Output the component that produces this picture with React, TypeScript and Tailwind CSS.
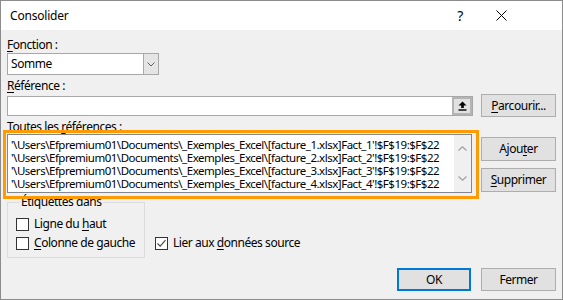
import React from "react";

const U = ({ children }: { children: React.ReactNode }) => (
  <span className="underline underline-offset-[2px] decoration-[1px]">{children}</span>
);

const Btn = ({ children, className = "" }: { children: React.ReactNode; className?: string }) => (
  <div
    className={`flex items-center justify-center bg-[#e1e1e1] border border-[#adadad] text-black ${className}`}
  >
    {children}
  </div>
);

const Check = ({ checked = false }: { checked?: boolean }) => (
  <div className="w-[13px] h-[13px] border border-[#333333] bg-white flex items-center justify-center shrink-0">
    {checked && (
      <svg width="11" height="11" viewBox="0 0 11 11">
        <path d="M1.5 5.5 L4.2 8.2 L9.5 2.2" fill="none" stroke="#444" strokeWidth="1.1" />
      </svg>
    )}
  </div>
);

const lines = [1, 2, 3, 4].map(
  (n) =>
    `'\\Users\\Efpremium01\\Documents\\_Exemples_Excel\\[facture_${n}.xlsx]Fact_${n}'!$F$19:$F$22`
);

export default function App() {
  return (
    <div
      className="w-[563px] h-[300px] border border-[#8c8c8c] flex flex-col text-[12px] tracking-[-0.45px] text-black overflow-hidden"
      style={{ fontFamily: '"Noto Sans", "Open Sans", sans-serif' }}
    >
      {/* Title bar */}
      <div className="h-[29px] bg-white flex items-center justify-between shrink-0">
        <span className="pl-[9px] text-[12px] tracking-[-0.2px]">Consolider</span>
        <div className="flex items-center">
          <span className="text-[14px] w-[20px] text-center mr-[26px]">?</span>
          <svg width="11" height="11" viewBox="0 0 11 11" className="mr-[55px]">
            <path d="M0.5 0.5 L10.5 10.5 M10.5 0.5 L0.5 10.5" stroke="#000" strokeWidth="1" />
          </svg>
        </div>
      </div>

      {/* Body */}
      <div className="flex-1 bg-[#f0f0f0] relative pl-[6px] pr-[6px] pt-[8px]">
        <div className="h-[14px] leading-[14px]">
          <U>F</U>onction :
        </div>
        <div className="mt-[1px] w-[152px] h-[22px] bg-white border border-[#a8a8a8] flex">
          <div className="flex-1 flex items-center pl-[3px]">Somme</div>
          <div className="w-[15px] h-full bg-[#e5e5e5] border-l border-[#a8a8a8] flex items-center justify-center">
            <svg width="8" height="5" viewBox="0 0 8 5">
              <path d="M0.5 0.5 L4 4 L7.5 0.5" fill="none" stroke="#606060" strokeWidth="1" />
            </svg>
          </div>
        </div>

        <div className="mt-[4px] h-[14px] leading-[14px]">
          <U>R</U>éférence :
        </div>
        <div className="mt-[1px] flex gap-[8px] items-start">
          <div className="w-[466px] h-[20px] mt-[2px] bg-white border border-[#a8a8a8] flex justify-end">
            <div className="w-[20px] h-full bg-[#e1e1e1] border-2 border-[#b4b4b4] flex items-center justify-center">
              <svg width="9" height="10" viewBox="0 0 9 10">
                <path d="M4.5 0.5 L8.5 4.5 L5.8 4.5 L5.8 7 L3.2 7 L3.2 4.5 L0.5 4.5 Z" fill="#000" />
                <rect x="0.5" y="8.3" width="8" height="1.4" fill="#000" />
              </svg>
            </div>
          </div>
          <Btn className="w-[75px] h-[23px]">
            <span>
              <U>P</U>arcourir...
            </span>
          </Btn>
        </div>

        <div className="mt-[3px] h-[14px] leading-[14px]">
          Toutes les <U>r</U>éférences :
        </div>
        <div className="flex gap-[9px] items-start">
          <div className="w-[465px] h-[59px] bg-white border border-[#828790] flex">
            <div className="flex-1 pl-[3px] pt-[3px] overflow-hidden whitespace-nowrap tracking-[-0.48px] text-[11.5px]">
              {lines.map((l) => (
                <div key={l} className="h-[13px] leading-[13px]">
                  {l}
                </div>
              ))}
            </div>
            <div className="w-[17px] h-full bg-[#f0f0f0] flex flex-col items-center justify-between py-[11px]">
              <svg width="9" height="5" viewBox="0 0 9 5">
                <path d="M0.5 4.5 L4.5 0.8 L8.5 4.5" fill="none" stroke="#a3a3a3" strokeWidth="1.3" />
              </svg>
              <svg width="9" height="5" viewBox="0 0 9 5">
                <path d="M0.5 0.5 L4.5 4.2 L8.5 0.5" fill="none" stroke="#a3a3a3" strokeWidth="1.3" />
              </svg>
            </div>
          </div>
          <div className="flex flex-col pt-[3px] gap-[7px]">
            <Btn className="w-[75px] h-[24px]">
              <span>
                Ajou<U>t</U>er
              </span>
            </Btn>
            <Btn className="w-[75px] h-[24px]">
              <span>
                <U>S</U>upprimer
              </span>
            </Btn>
          </div>
        </div>

        <div className="mt-[2px] flex items-end gap-[10px]">
          <fieldset className="w-[138px] h-[63px] border border-[#dcdcdc] pl-[8px] pt-[7px]">
            <legend className="ml-[4px] px-[1px] h-[14px] leading-[14px]">Étiquettes dans</legend>
            <div className="flex items-center gap-[5px] h-[16px]">
              <Check />
              <span>
                Ligne du <U>h</U>aut
              </span>
            </div>
            <div className="flex items-center gap-[5px] h-[16px] mt-[3px]">
              <Check />
              <span>
                <U>C</U>olonne de gauche
              </span>
            </div>
          </fieldset>
          <div className="flex items-center gap-[5px] h-[16px] mb-[7px]">
            <Check checked />
            <span>
              Lier aux <U>d</U>onnées source
            </span>
          </div>
        </div>

        <div className="mt-[10px] flex justify-end gap-[10px]">
          <div className="w-[74px] h-[23px] bg-[#e1e1e1] border-2 border-[#0078d7] flex items-center justify-center">
            OK
          </div>
          <Btn className="w-[75px] h-[23px]">Fermer</Btn>
        </div>

        {/* Orange highlight overlay */}
        <div className="absolute left-[2px] top-[100px] w-[476px] h-[69px] border-[3px] border-[#ff9a00] pointer-events-none" />
      </div>
    </div>
  );
}
